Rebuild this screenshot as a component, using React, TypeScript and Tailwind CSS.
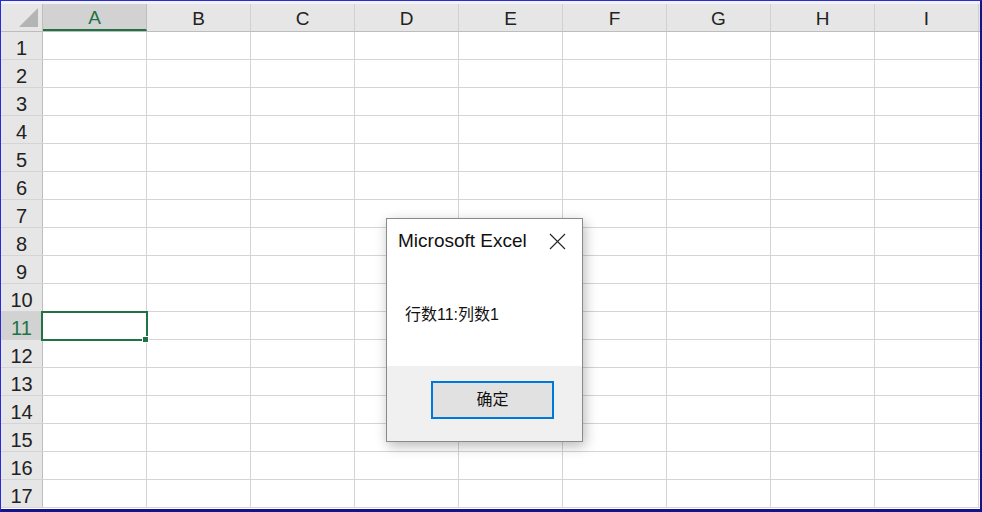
import React from "react";

const cols = ["A", "B", "C", "D", "E", "F", "G", "H", "I"];
const rows = Array.from({ length: 17 }, (_, i) => i + 1);

const font = { fontFamily: '"Liberation Sans", "Noto Sans CJK SC", sans-serif' };

function Dialog() {
  return (
    <div className="absolute left-[385px] top-[217px] w-[197px] h-[224px] flex flex-col bg-white border border-[#8a8a8a] shadow-[2px_4px_12px_rgba(0,0,0,0.28)]">
      <div className="flex items-start justify-between pl-[11px] pr-[16px] pt-[11px]">
        <span className="text-[19px] leading-[22px] text-[#111]">Microsoft Excel</span>
        <svg width="17" height="17" viewBox="0 0 17 17" className="mt-[3px]">
          <path d="M1 1 L16 16 M16 1 L1 16" stroke="#222" strokeWidth="1.1" fill="none" />
        </svg>
      </div>
      <div className="flex-1 pl-[18px] pt-[53px] text-[16px] leading-[20px] text-[#111]">行数11:列数1</div>
      <div className="h-[75px] bg-[#f0f0f0] pl-[44px] pt-[15px]">
        <button className="w-[123px] h-[38px] bg-[#e1e1e1] border-2 border-[#0078d7] text-[16px] text-[#111]" style={font}>
          确定
        </button>
      </div>
    </div>
  );
}

export default function App() {
  return (
    <div className="relative w-[982px] h-[512px] overflow-hidden bg-white border-l border-t border-[#2a2ad8] border-r-2 border-r-[#14148a] border-b-[3px] border-b-[#14148a]" style={font}>
      <div className="h-[3px] bg-[#f2f2f2]" />
      <div className="flex h-[28px] bg-[#e6e6e6] border-b border-[#bdbdbd]">
        <div className="w-[42px] shrink-0 border-r border-[#bdbdbd] relative">
          <svg width="20" height="20" viewBox="0 0 20 20" className="absolute right-[3px] bottom-[3px]">
            <polygon points="19,0 19,19 0,19" fill="#b4b4b4" />
          </svg>
        </div>
        {cols.map((c) => (
          <div
            key={c}
            className={
              c === "A"
                ? "w-[104px] shrink-0 flex items-center justify-center pt-[3px] text-[19px] bg-[#d2d2d2] text-[#217346] border-r border-[#bdbdbd] border-b-2 border-b-[#217346]"
                : "w-[104px] shrink-0 flex items-center justify-center pt-[3px] text-[19px] text-[#222] border-r border-[#d0d0d0]"
            }
          >
            {c}
          </div>
        ))}
      </div>
      {rows.map((r) => (
        <div key={r} className="flex h-[28px] border-b border-[#d4d4d4]">
          <div
            className={
              r === 11
                ? "w-[42px] shrink-0 flex items-center justify-center pt-[4px] text-[20px] bg-[#d2d2d2] text-[#217346] border-r border-[#bdbdbd]"
                : "w-[42px] shrink-0 flex items-center justify-center pt-[4px] text-[20px] bg-[#e6e6e6] text-[#222] border-r border-[#bdbdbd]"
            }
          >
            {r}
          </div>
          {cols.map((c) => (
            <div key={c} className="w-[104px] shrink-0 border-r border-[#d4d4d4]" />
          ))}
        </div>
      ))}
      <div className="absolute left-[40px] top-[310px] w-[107px] h-[30px] border-2 border-[#217346]" />
      <div className="absolute left-[141px] top-[335px] w-[7px] h-[7px] bg-[#217346] border border-white" />
      <Dialog />
    </div>
  );
}
